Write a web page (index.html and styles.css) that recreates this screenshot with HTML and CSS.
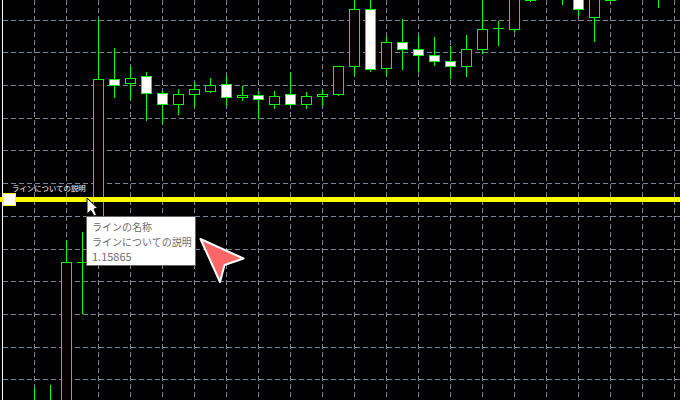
FILE: index.html
```html
<!DOCTYPE html>
<html lang="ja">
<head>
<meta charset="utf-8">
<title>ライン</title>
<link rel="stylesheet" href="styles.css">
</head>
<body>
<main class="chart">
<svg class="plot" width="680" height="400" viewBox="0 0 680 400">
  <g class="grid">
    <path d="M3 20.5H680M3 52.5H680M3 85.5H680M3 118.5H680M3 150.5H680M3 183.5H680M3 216.5H680M3 249.5H680M3 281.5H680M3 314.5H680M3 347.5H680M3 379.5H680"/>
    <path d="M34.5 0V400M66.5 0V400M98.5 0V400M130.5 0V400M162.5 0V400M194.5 0V400M226.5 0V400M258.5 0V400M290.5 0V400M322.5 0V400M354.5 0V400M386.5 0V400M418.5 0V400M450.5 0V400M482.5 0V400M514.5 0V400M546.5 0V400M578.5 0V400M610.5 0V400M642.5 0V400M674.5 0V400"/>
  </g>
  <path class="axis" d="M2.5 0V400"/>
  <path class="wick" d="M34.5 387V400M50.5 385V400M66.5 240V262M82.5 232V314M98.5 19V79M114.5 48V98M130.5 66V100M146.5 72V121M162.5 91V124M178.5 89V115M194.5 82V107M210.5 78V93M226.5 76V106M242.5 86V101M258.5 91V119M274.5 91V109M290.5 73V106M306.5 92V109M322.5 90V106M338.5 90V96M354.5 0V76M370.5 0V72M386.5 37V76M402.5 19V70M418.5 35V72M434.5 37V66M450.5 46V79M466.5 35V77M482.5 0V54M498.5 21V46M514.5 20V32M530.5 0V2M562.5 0V5M578.5 0V16M594.5 0V42M658.5 0V8"/>
  <path class="wick" d="M77 262.5H87M493 28.5H504"/>
  <g class="bear">
    <rect x="61.5" y="262.5" width="10" height="150"/>
    <rect x="93.5" y="79.5" width="10" height="170"/>
    <rect x="125.5" y="78.5" width="10" height="5"/>
    <rect x="173.5" y="94.5" width="10" height="10"/>
    <rect x="189.5" y="89.5" width="10" height="5"/>
    <rect x="205.5" y="85.5" width="10" height="6"/>
    <rect x="237.5" y="95.5" width="10" height="2"/>
    <rect x="269.5" y="96.5" width="10" height="8"/>
    <rect x="301.5" y="96.5" width="10" height="8"/>
    <rect x="317.5" y="94.5" width="10" height="2"/>
    <rect x="333.5" y="66.5" width="10" height="28"/>
    <rect x="349.5" y="9.5" width="10" height="57"/>
    <rect x="381.5" y="42.5" width="10" height="26"/>
    <rect x="461.5" y="49.5" width="10" height="17"/>
    <rect x="477.5" y="29.5" width="10" height="20"/>
    <rect x="509.5" y="-5.5" width="10" height="35"/>
    <rect x="525.5" y="-5.5" width="10" height="6"/>
    <rect x="589.5" y="-5.5" width="10" height="23"/>
    <rect x="605.5" y="-5.5" width="10" height="6"/>
  </g>
  <g class="bull">
    <rect x="109.5" y="79.5" width="10" height="6"/>
    <rect x="141.5" y="76.5" width="10" height="17"/>
    <rect x="157.5" y="93.5" width="10" height="11"/>
    <rect x="221.5" y="84.5" width="10" height="13"/>
    <rect x="253.5" y="95.5" width="10" height="4"/>
    <rect x="285.5" y="94.5" width="10" height="10"/>
    <rect x="365.5" y="9.5" width="10" height="60"/>
    <rect x="397.5" y="42.5" width="10" height="7"/>
    <rect x="413.5" y="49.5" width="10" height="6"/>
    <rect x="429.5" y="55.5" width="10" height="6"/>
    <rect x="445.5" y="61.5" width="10" height="5"/>
    <rect x="573.5" y="-5.5" width="10" height="15"/>
  </g>
  <rect class="level" x="0" y="197" width="680" height="5"/>
  <rect class="handle" x="3.5" y="193.5" width="12" height="12"/>
  <polygon class="pointer" points="87,198 87,214 91,210.500 94,216 96.500,215 94,209 97.500,208"/>
  <polygon class="marker" points="200.500,239 243.500,258.500 224.500,265 220,282"/>
</svg>
<p class="line-label">ラインについての説明</p>
<div class="tip">
  <div>ラインの名称</div>
  <div>ラインについての説明</div>
  <div class="tip-price">1.15865</div>
</div>
</main>
</body>
</html>
```
FILE: styles.css
```css
* { box-sizing: border-box; }
html, body { margin: 0; padding: 0; background: #000; }
.chart {
  position: relative;
  width: 680px;
  height: 400px;
  overflow: hidden;
  background: #000;
  font-family: "Noto Sans CJK JP", "Noto Sans", sans-serif;
}
.plot { display: block; shape-rendering: crispEdges; }
.grid path { fill: none; stroke: #778899; stroke-width: 1; stroke-dasharray: 5 3; }
.axis { fill: none; stroke: #fff; stroke-width: 1; }
.wick { fill: none; stroke: #00ff00; stroke-width: 1; }
.bear rect { fill: #000; stroke: #00ff00; stroke-width: 1; }
.bull rect { fill: #fff; stroke: #00ff00; stroke-width: 1; }
.level { fill: #ffff00; }
.handle { fill: #fff; stroke: #ffff00; stroke-width: 1; }
.pointer { fill: #fff; stroke: #000; stroke-width: 1; shape-rendering: auto; }
.marker { fill: #ff6666; stroke: #fff; stroke-width: 2; stroke-linejoin: round; shape-rendering: auto; }
.line-label {
  position: absolute;
  left: 12px;
  top: 183px;
  margin: 0;
  color: #fff;
  font-size: 7.4px;
  line-height: 10px;
  white-space: nowrap;
}
.tip {
  position: absolute;
  left: 86px;
  top: 216px;
  width: 110px;
  height: 50px;
  padding: 2px 0 0 5px;
  background: #fff;
  border: 1px solid #666;
  color: #6d6d6d;
  font-size: 10px;
  line-height: 15px;
  white-space: nowrap;
}
.tip-price { font-size: 11px; }
```
